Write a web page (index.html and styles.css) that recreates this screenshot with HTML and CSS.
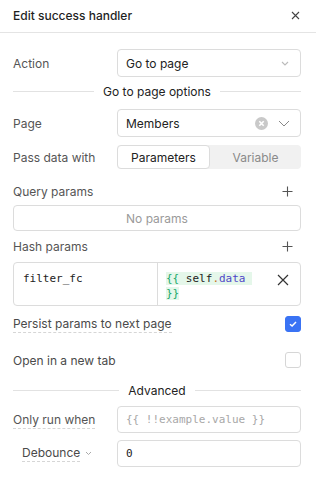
FILE: index.html
```html
<!DOCTYPE html>
<html>
<head>
<meta charset="utf-8">
<link rel="stylesheet" href="styles.css">
</head>
<body>
<div class="panel">
  <header class="hdr">
    <span class="title">Edit success handler</span>
    <span class="close">
      <svg width="9" height="9" viewBox="0 0 9 9"><path d="M1 1L8 8M8 1L1 8" stroke="#444" stroke-width="1.1" fill="none"/></svg>
    </span>
  </header>
  <div class="body">
    <div class="row r-action">
      <span class="lbl">Action</span>
      <div class="field select">
        <span class="val">Go to page</span>
        <svg class="chev-sm" width="8" height="5" viewBox="0 0 8 5"><path d="M1 1L4 4L7 1" stroke="#bbb" stroke-width="1.1" fill="none"/></svg>
      </div>
    </div>
    <div class="divider r-div1"><span>Go to page options</span></div>
    <div class="row r-page">
      <span class="lbl">Page</span>
      <div class="field select">
        <span class="val">Members</span>
        <svg class="clear" width="13" height="13" viewBox="0 0 13 13"><circle cx="6.5" cy="6.5" r="6.5" fill="#c9c9c9"/><path d="M4.3 4.3L8.7 8.7M8.7 4.3L4.3 8.7" stroke="#fff" stroke-width="1.6" fill="none"/></svg>
        <svg class="chev" width="12" height="7" viewBox="0 0 12 7"><path d="M1 1L6 6L11 1" stroke="#888" stroke-width="1" fill="none"/></svg>
      </div>
    </div>
    <div class="row r-seg">
      <span class="lbl">Pass data with</span>
      <div class="seg">
        <span class="seg-item active">Parameters</span>
        <span class="seg-item">Variable</span>
      </div>
    </div>
    <div class="sub r-query">
      <span class="lbl">Query params</span>
      <svg class="plus" width="11" height="11" viewBox="0 0 11 11"><path d="M5.5 0.5V10.5M0.5 5.5H10.5" stroke="#555" stroke-width="1.1" fill="none"/></svg>
    </div>
    <div class="empty">No params</div>
    <div class="sub r-hash">
      <span class="lbl">Hash params</span>
      <svg class="plus" width="11" height="11" viewBox="0 0 11 11"><path d="M5.5 0.5V10.5M0.5 5.5H10.5" stroke="#555" stroke-width="1.1" fill="none"/></svg>
    </div>
    <div class="ptable">
      <div class="pkey">filter_fc</div>
      <div class="pval">
        <div class="code"><span class="hl"><span class="br">{{</span> self<span class="dot">.</span><span class="prop">data</span> <span class="br">}}</span></span></div>
        <svg class="del" width="12" height="12" viewBox="0 0 12 12"><path d="M1 1L11 11M11 1L1 11" stroke="#333" stroke-width="1.2" fill="none"/></svg>
      </div>
    </div>
    <div class="crow r-persist">
      <span class="lbl dashed dark">Persist params to next page</span>
      <span class="cb checked">
        <svg width="10" height="8" viewBox="0 0 10 8"><path d="M2 4.2L4.1 6L8 2" stroke="#fff" stroke-width="1.5" fill="none"/></svg>
      </span>
    </div>
    <div class="crow r-newtab">
      <span class="lbl dark">Open in a new tab</span>
      <span class="cb"></span>
    </div>
    <div class="divider r-div2"><span>Advanced</span></div>
    <div class="row r-only">
      <span class="lbl"><span class="dashed">Only run when</span></span>
      <div class="field code-field"><span class="ph">{{ !!example.value }}</span></div>
    </div>
    <div class="row r-deb">
      <span class="lbl deb"><span class="dashed dark">Debounce</span>
        <svg width="7" height="5" viewBox="0 0 7 5"><path d="M1 1L3.5 3.5L6 1" stroke="#aaa" stroke-width="1" fill="none"/></svg>
      </span>
      <div class="field code-field"><span class="num">0</span></div>
    </div>
  </div>
</div>
</body>
</html>
```

FILE: styles.css
```css
* { box-sizing: border-box; }
html, body { margin: 0; padding: 0; background: #fff; }
body {
  font-family: Inter, "Noto Sans", sans-serif;
  font-size: 12px;
  color: #222;
}
.panel { width: 316px; height: 484px; overflow: hidden; }
.hdr {
  height: 33px;
  border-bottom: 1px solid #e4e4e4;
  display: flex;
  align-items: center;
  justify-content: space-between;
  padding: 0 15px 2px 13px;
}
.title { font-size: 12px; font-weight: 500; color: #1f1f1f; }
.close { display: flex; margin-right: 1px; }

.body { padding: 16px 15px 0 13px; display: flex; flex-direction: column; }

.row { display: flex; align-items: center; height: 28px; }
.lbl { width: 104px; flex: none; color: #555; }
.lbl.dark, .dark { color: #4a4a4a; }
.field {
  flex: 1;
  height: 100%;
  border: 1px solid #dcdcdc;
  border-radius: 4px;
  display: flex;
  align-items: center;
  padding: 0 8px;
  color: #222;
}
.select .val { flex: 1; }
.chev-sm { margin-right: 3px; }
.clear { margin-right: 10px; }
.chev { margin-right: 2px; }

.divider { display: flex; align-items: center; height: 28px; gap: 9px; color: #222; }
.divider::before, .divider::after { content: ""; flex: 1; height: 1px; background: #e2e2e2; }
.r-div1 { height: 28px; }
.r-page { margin-top: 4px; }
.r-seg { margin-top: 8px; height: 24px; }
.seg {
  flex: 1; height: 100%;
  background: #f1f1f1;
  border-radius: 4px;
  display: flex;
}
.seg-item { flex: 1; display: flex; align-items: center; justify-content: center; color: #8a8a8a; }
.seg-item.active { background: #fff; border: 1px solid #dcdcdc; border-radius: 4px; color: #222; }

.sub { display: flex; align-items: center; justify-content: space-between; height: 20px; }
.sub .lbl { width: auto; }
.plus { margin-right: 8px; }
.r-query { margin-top: 12px; }
.empty {
  margin-top: 4px;
  height: 26px;
  border: 1px solid #dcdcdc;
  border-radius: 4px;
  display: flex; align-items: center; justify-content: center;
  color: #9a9a9a;
}
.r-hash { margin-top: 5px; }

.ptable {
  margin-top: 6px;
  height: 44px;
  border: 1px solid #dcdcdc;
  border-radius: 4px;
  display: flex;
}
.pkey {
  width: 144px; flex: none;
  border-right: 1px solid #dcdcdc;
  padding: 8px 9px;
  font-family: "DejaVu Sans Mono", monospace;
  font-size: 11px;
  line-height: 15px;
  color: #222;
}
.pval { flex: 1; display: flex; align-items: flex-start; padding: 8px 0 0 8px; }
.code {
  width: 94px;
  font-family: "DejaVu Sans Mono", monospace;
  font-size: 11px;
  line-height: 15px;
  color: #222;
  white-space: pre-wrap;
}
.hl { background: #e5f7ea; }
.br { color: #22a86a; }
.dot { color: #c8741d; }
.prop { color: #4f46c8; }
.del { margin: 3px 0 0 17px; }

.crow { display: flex; align-items: center; justify-content: space-between; height: 24px; }
.r-persist { margin-top: 6px; }
.r-newtab { margin-top: 12px; }
.dashed { border-bottom: 1px dashed #d6d6d6; padding-bottom: 1px; }
.r-persist .lbl { width: auto; }
.r-newtab .lbl { width: auto; }
.cb {
  width: 16px; height: 16px;
  border: 1px solid #d6d6d6;
  border-radius: 3px;
  display: flex; align-items: center; justify-content: center;
}
.cb.checked { background: #3a73f4; border-color: #3a73f4; }

.r-div2 { height: 24px; margin-top: 6px; }
.r-only { margin-top: 4px; height: 27px; }
.r-deb { margin-top: 7px; height: 27px; }
.lbl.deb { padding-left: 9px; display: flex; align-items: center; gap: 5px; }
.code-field { font-family: "DejaVu Sans Mono", monospace; font-size: 11px; }
.ph { color: #a8a8a8; }
.num { color: #222; }
```
